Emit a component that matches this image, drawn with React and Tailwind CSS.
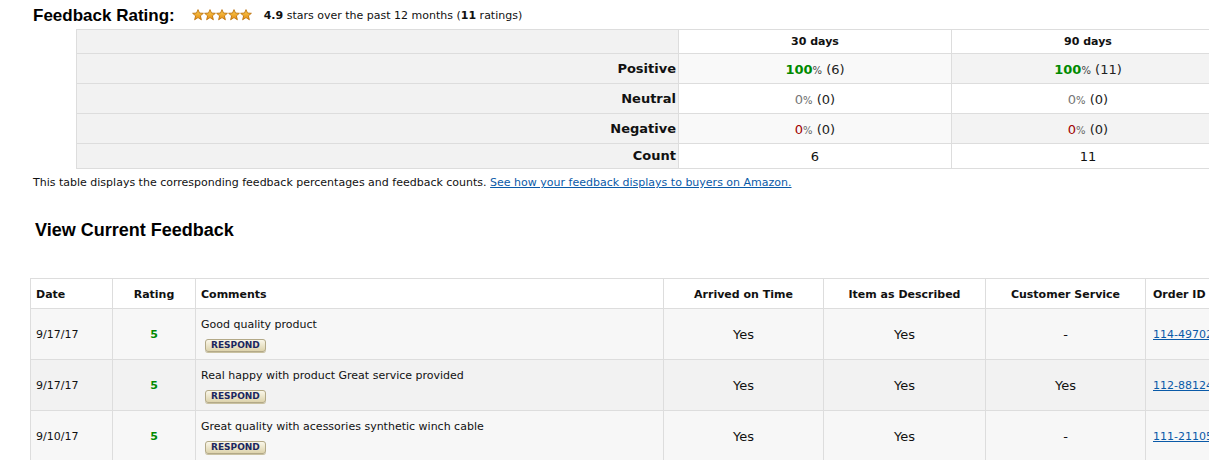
import React from 'react';

const body = "[font-family:'DejaVu_Sans',Verdana,sans-serif]";
const head = "[font-family:'Liberation_Sans',Arial,sans-serif]";

const Star = () => (
  <svg width="12" height="12" viewBox="0 0 12 12">
    <defs>
      <linearGradient id="sg" x1="0" y1="0" x2="0" y2="1">
        <stop offset="0" stopColor="#fcd15a" />
        <stop offset="1" stopColor="#e58a0c" />
      </linearGradient>
    </defs>
    <polygon
      points="6,0.6 7.5,4 11.4,4.3 8.4,6.8 9.4,10.8 6,8.6 2.6,10.8 3.6,6.8 0.6,4.3 4.5,4"
      fill="url(#sg)"
      stroke="#b86a00"
      strokeWidth="0.8"
      strokeLinejoin="round"
    />
  </svg>
);

const Stars = () => (
  <div className="flex ml-[17px] mt-[-3px]">
    {[0, 1, 2, 3, 4].map((i) => <Star key={i} />)}
  </div>
);

const Respond = () => (
  <span className="inline-block mt-[7px] ml-[4px] px-[5px] h-[13px] leading-[11px] text-[9px] font-bold text-[#1b2760] border border-[#b3a988] rounded-[3px] bg-gradient-to-b from-[#faf7ea] to-[#ddd3ac] shadow-[0_1px_0_#c9c1a0]">
    RESPOND
  </span>
);

const pct = (val, color, count, bold) => (
  <span>
    <span className={bold ? 'text-[13px] font-bold ' + color : 'text-[13px] ' + color}>{val}</span>
    <span className={'text-[10px] ' + (bold ? 'text-[#444]' : 'text-[#666]')}>%</span>
    <span className="text-[13px] text-[#222]"> ({count})</span>
  </span>
);

const summary = [
  { label: 'Positive', h: 'h-[30px]', a: pct('100', 'text-[#008a00]', 6, true), b: pct('100', 'text-[#008a00]', 11, true), bgA: 'bg-[#f9f9f9]', bgB: 'bg-[#f3f3f3]' },
  { label: 'Neutral', h: 'h-[30px]', a: pct('0', 'text-[#777]', 0), b: pct('0', 'text-[#777]', 0), bgA: 'bg-white', bgB: 'bg-white' },
  { label: 'Negative', h: 'h-[30px]', a: pct('0', 'text-[#a00000]', 0), b: pct('0', 'text-[#a00000]', 0), bgA: 'bg-[#f9f9f9]', bgB: 'bg-[#f3f3f3]' },
  { label: 'Count', h: 'h-[24px]', a: <span className="text-[13px]">6</span>, b: <span className="text-[13px]">11</span>, bgA: 'bg-white', bgB: 'bg-white' },
];

const feedback = [
  { date: '9/17/17', comment: 'Good quality product', cs: '-', order: '114-4970281-5563416', bg: 'bg-[#f7f7f7]' },
  { date: '9/17/17', comment: 'Real happy with product Great service provided', cs: 'Yes', order: '112-8812467-0239451', bg: 'bg-[#f2f2f2]' },
  { date: '9/10/17', comment: 'Great quality with acessories synthetic winch cable', cs: '-', order: '111-2110573-8842716', bg: 'bg-[#f7f7f7]' },
];

const App = () => {
  return (
    <div className={'w-[1209px] h-[460px] overflow-hidden bg-white text-[#111] ' + body}>
      <div className="flex items-center h-[29px] pl-[33px] pt-[3px]">
        <span className={'text-[17px] font-bold text-black ' + head}>Feedback Rating:</span>
        <Stars />
        <span className="ml-[12px] text-[11px] text-[#111]">
          <b>4.9</b> stars over the past 12 months (<b>11</b> ratings)
        </span>
      </div>

      <table className="ml-[76px] border-collapse table-fixed w-[1148px]">
        <colgroup>
          <col className="w-[602px]" />
          <col className="w-[273px]" />
          <col className="w-[273px]" />
        </colgroup>
        <thead>
          <tr className="h-[24px]">
            <th className="border border-[#ddd] bg-[#f2f2f2]"></th>
            <th className="border border-[#ddd] bg-white text-[11px] font-bold text-center align-middle pt-[1px]">30 days</th>
            <th className="border border-[#ddd] bg-white text-[11px] font-bold text-center align-middle pt-[1px]">90 days</th>
          </tr>
        </thead>
        <tbody>
          {summary.map((r) => (
            <tr key={r.label} className={r.h}>
              <td className="border border-[#ddd] bg-[#f2f2f2] text-right pr-[2px] text-[13px] font-bold align-middle">{r.label}</td>
              <td className={'border border-[#ddd] text-center align-middle ' + r.bgA}>{r.a}</td>
              <td className={'border border-[#ddd] text-center align-middle ' + r.bgB}>{r.b}</td>
            </tr>
          ))}
        </tbody>
      </table>

      <p className="mt-[7px] ml-[33px] text-[11px] leading-[14px] text-[#111]">
        This table displays the corresponding feedback percentages and feedback counts.{' '}
        <a href="#" className="text-[#0a5aa8] underline">See how your feedback displays to buyers on Amazon.</a>
      </p>

      <h2 className={'mt-[29px] ml-[35px] text-[18px] leading-[22px] font-bold text-black ' + head}>View Current Feedback</h2>

      <table className="mt-[37px] ml-[30px] border-collapse table-fixed w-[1235px]">
        <colgroup>
          <col className="w-[82px]" />
          <col className="w-[83px]" />
          <col className="w-[468px]" />
          <col className="w-[160px]" />
          <col className="w-[162px]" />
          <col className="w-[160px]" />
          <col className="w-[120px]" />
        </colgroup>
        <thead>
          <tr className="h-[30px] text-[11px] font-bold">
            <th className="border border-[#ddd] text-left pl-[5px] pt-[3px]">Date</th>
            <th className="border border-[#ddd] text-center pt-[3px]">Rating</th>
            <th className="border border-[#ddd] text-left pl-[5px] pt-[3px]">Comments</th>
            <th className="border border-[#ddd] text-center pt-[3px]">Arrived on Time</th>
            <th className="border border-[#ddd] text-center pt-[3px]">Item as Described</th>
            <th className="border border-[#ddd] text-center pt-[3px]">Customer Service</th>
            <th className="border border-[#ddd] text-left pl-[7px] pt-[3px]">Order ID</th>
          </tr>
        </thead>
        <tbody>
          {feedback.map((f, i) => (
            <tr key={i} className={'h-[51px] ' + f.bg}>
              <td className="border border-[#ddd] pl-[5px] pt-[2px] text-[11px] align-middle">{f.date}</td>
              <td className="border border-[#ddd] pt-[2px] text-center text-[11px] font-bold text-[#008a00] align-middle">5</td>
              <td className="border border-[#ddd] pl-[5px] pt-[9px] align-top text-[11px] leading-[14px]">
                <div>{f.comment}</div>
                <Respond />
              </td>
              <td className="border border-[#ddd] pt-[2px] text-center text-[13px] align-middle">Yes</td>
              <td className="border border-[#ddd] pt-[2px] text-center text-[13px] align-middle">Yes</td>
              <td className="border border-[#ddd] pt-[2px] text-center text-[13px] align-middle">{f.cs}</td>
              <td className="border border-[#ddd] pl-[7px] pt-[2px] text-[11px] align-middle whitespace-nowrap">
                <a href="#" className="text-[#0a5aa8] underline">{f.order}</a>
              </td>
            </tr>
          ))}
        </tbody>
      </table>
    </div>
  );
};

export default App;
